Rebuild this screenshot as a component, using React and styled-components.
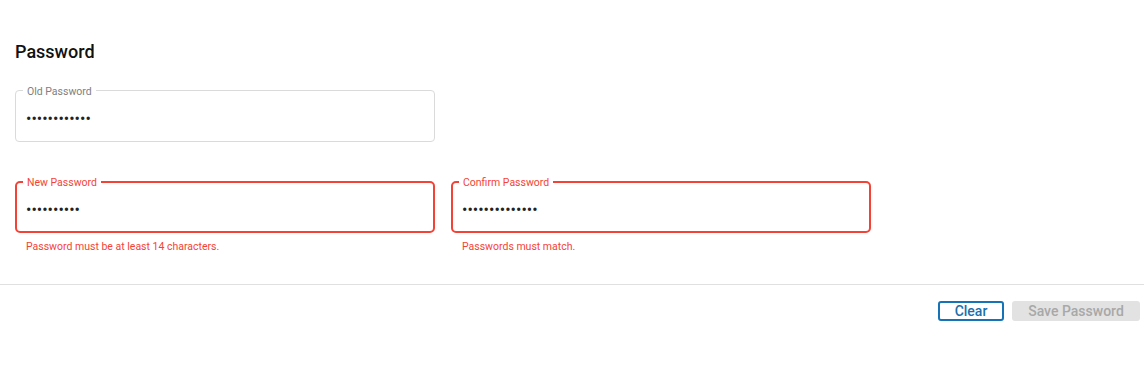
import React from "react";
import styled, { createGlobalStyle } from "styled-components";

const GlobalStyle = createGlobalStyle`
  html, body {
    margin: 0;
    padding: 0;
    background: #ffffff;
    font-family: Roboto, "Liberation Sans", Arial, sans-serif;
  }
`;

const Page = styled.div`
  width: 1144px;
  min-height: 371px;
  background: #fff;
`;

const Section = styled.section`
  padding: 40px 15px 0;
`;

const Title = styled.h2`
  margin: 0;
  font-size: 18px;
  line-height: 24px;
  font-weight: 500;
  color: #111;
`;

const FieldGrid = styled.div`
  display: grid;
  grid-template-columns: 420px 420px;
  column-gap: 16px;
  row-gap: 39px;
  margin-top: 26px;
`;

const FieldWrap = styled.div`
  display: flex;
  flex-direction: column;
`;

const Box = styled.div`
  position: relative;
  box-sizing: border-box;
  height: 52px;
  border: ${(p) => (p.$error ? "2px solid #f44336" : "1px solid #dadada")};
  border-radius: ${(p) => (p.$error ? "5px" : "4px")};
  display: flex;
  align-items: center;
`;

const Label = styled.span`
  position: absolute;
  top: ${(p) => (p.$error ? "-6px" : "-5px")};
  left: ${(p) => (p.$error ? "6px" : "7px")};
  padding: 0 4px;
  background: #fff;
  font-size: 10.5px;
  line-height: 11px;
  color: ${(p) => (p.$error ? "#f44336" : "#808080")};
`;

const Input = styled.input`
  width: 100%;
  height: 100%;
  box-sizing: border-box;
  border: none;
  outline: none;
  background: transparent;
  padding: 4px ${(p) => (p.$error ? "9px" : "10px")} 0;
  font-family: Roboto, "Liberation Sans", Arial, sans-serif;
  font-size: 16px;
  color: #222;
`;

const Helper = styled.div`
  margin-top: 7px;
  padding-left: 11px;
  font-size: 10.5px;
  line-height: 13px;
  color: #f44336;
`;

const Divider = styled.hr`
  margin: 31px 0 0;
  border: none;
  border-top: 1px solid #e0e0e0;
`;

const Footer = styled.div`
  display: flex;
  justify-content: flex-end;
  gap: 8px;
  padding: 16px 4px 0 0;
`;

const Button = styled.button`
  box-sizing: border-box;
  height: 20px;
  padding: 0;
  border-radius: 3px;
  font-family: Roboto, "Liberation Sans", Arial, sans-serif;
  font-size: 14px;
  font-weight: 500;
  line-height: 16px;
  cursor: pointer;
  width: ${(p) => p.$width}px;
  border: ${(p) => (p.$primary ? "2px solid #1673b6" : "none")};
  background: ${(p) => (p.$primary ? "#fff" : "#e2e2e2")};
  color: ${(p) => (p.$primary ? "#1a6fad" : "#a8a8a8")};
`;

const Field = ({ label, value, error, message }) => (
  <FieldWrap>
    <Box $error={!!error}>
      <Label $error={!!error}>{label}</Label>
      <Input type="password" defaultValue={value} readOnly $error={!!error} />
    </Box>
    {message && <Helper>{message}</Helper>}
  </FieldWrap>
);

export default function App() {
  return (
    <Page>
      <GlobalStyle />
      <Section>
        <Title>Password</Title>
        <FieldGrid>
          <Field label="Old Password" value="oldpassword1" />
          <div />
          <Field
            label="New Password"
            value="newpasswor"
            error
            message="Password must be at least 14 characters."
          />
          <Field
            label="Confirm Password"
            value="confirmpasswor"
            error
            message="Passwords must match."
          />
        </FieldGrid>
      </Section>
      <Divider />
      <Footer>
        <Button $primary $width={66}>Clear</Button>
        <Button $width={128} disabled>Save Password</Button>
      </Footer>
    </Page>
  );
}
